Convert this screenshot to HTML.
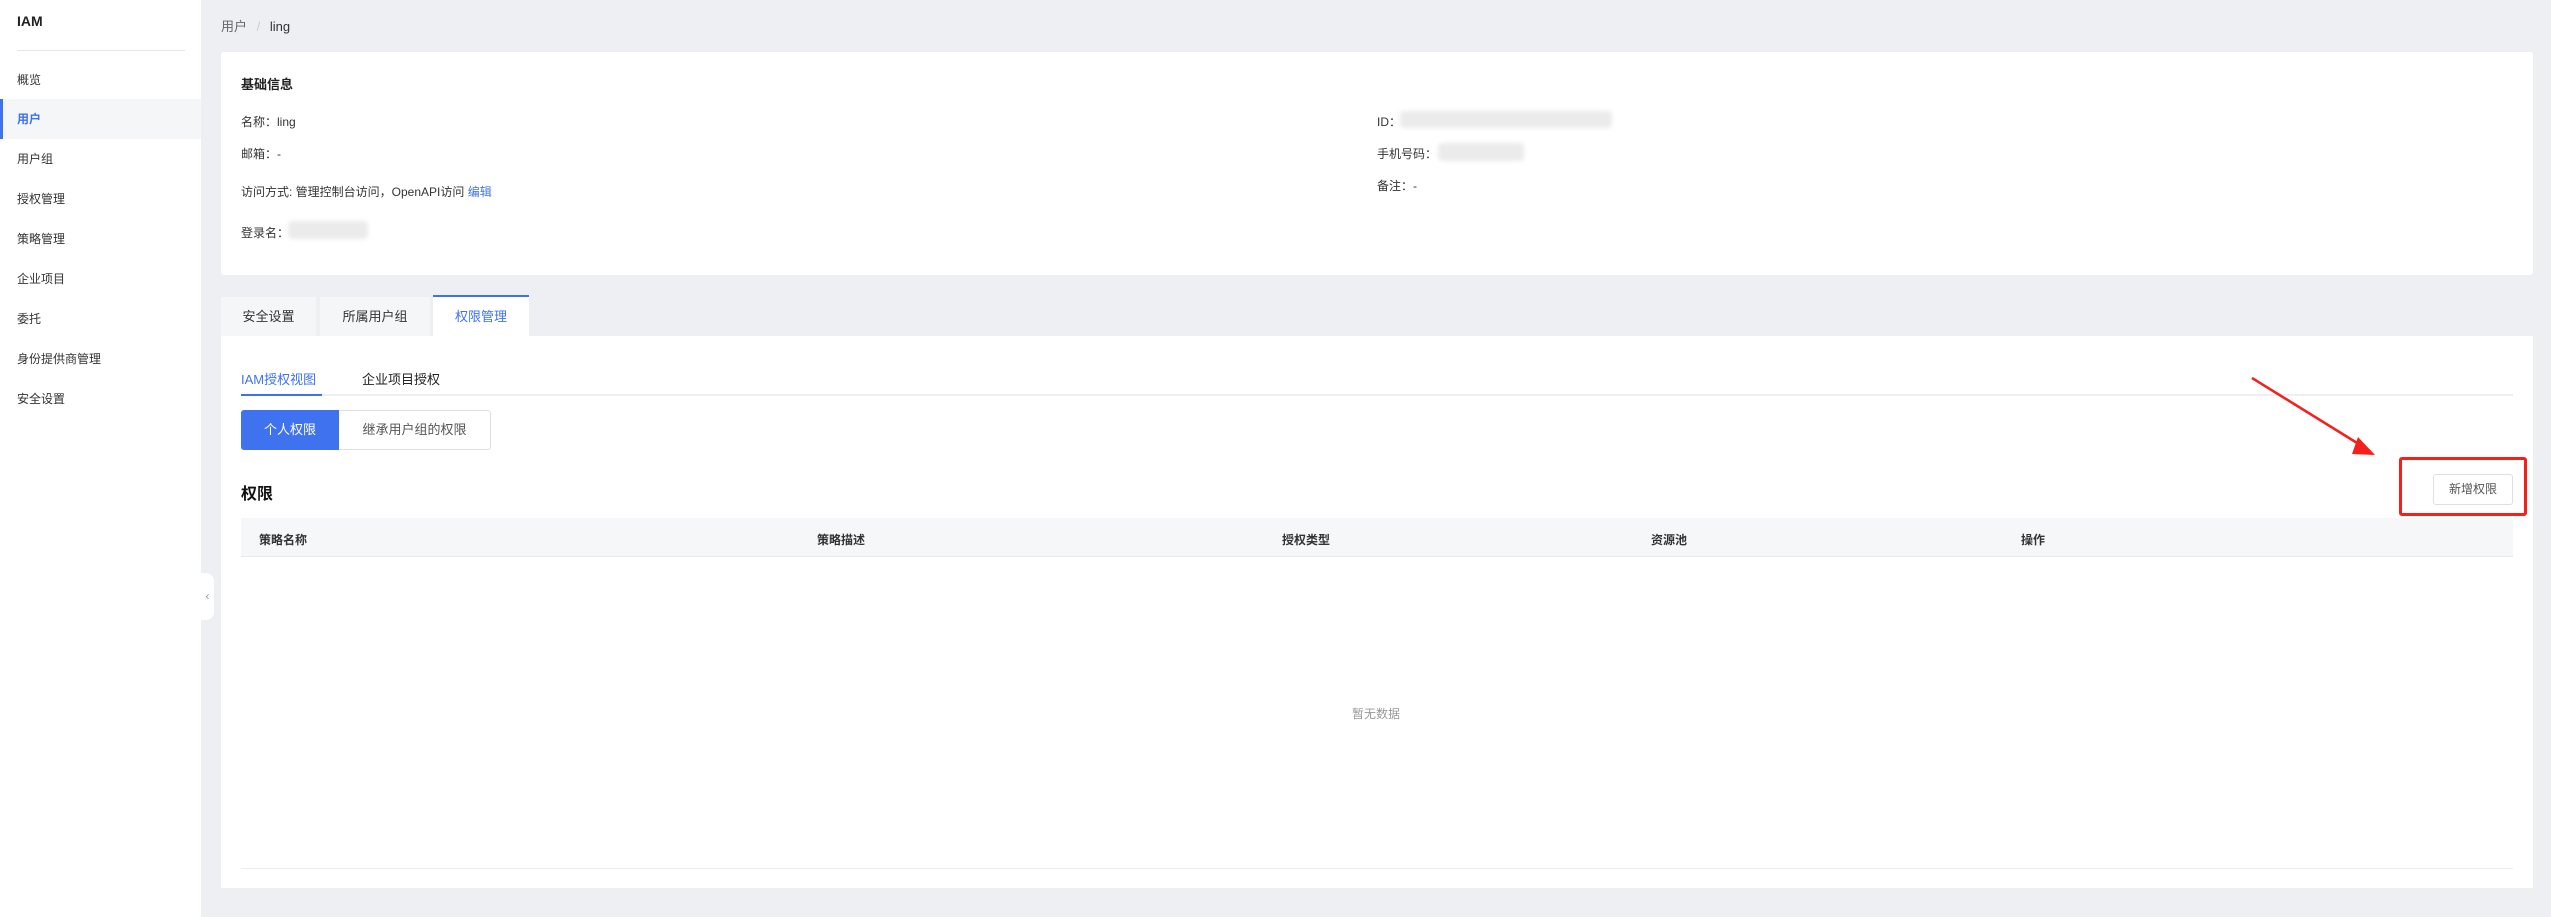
<!DOCTYPE html>
<html><head><meta charset="utf-8"><style>
*{margin:0;padding:0;box-sizing:border-box}
body{width:2551px;height:917px;background:#eeeff3;font-family:"Liberation Sans","Noto Sans CJK SC",sans-serif;font-size:12px;color:#333;position:relative;overflow:hidden}
.a{position:absolute;white-space:nowrap}
.side{position:absolute;left:0;top:0;width:201px;height:917px;background:#fff}
.mi{position:absolute;left:17px;line-height:14px;font-size:12px;color:#333}
.blur{position:absolute;background:#ebebeb;border-radius:4px;filter:blur(2px)}
.th{position:absolute;top:531px;font-size:12px;color:#333;font-weight:bold}
</style></head><body>
<div class="side">
<div class="a" style="left:17px;top:13px;font-weight:bold;font-size:14px;color:#222">IAM</div>
<div class="a" style="left:17px;top:50px;width:168px;height:1px;background:#e4e6ea"></div>
<div class="a" style="left:0;top:99px;width:201px;height:40px;background:#f5f6f8;border-left:3px solid #3f72ee"></div>
<div class="mi" style="top:73px">概览</div>
<div class="mi" style="top:112px;color:#3f72ee;font-weight:bold">用户</div>
<div class="mi" style="top:152px">用户组</div>
<div class="mi" style="top:192px">授权管理</div>
<div class="mi" style="top:232px">策略管理</div>
<div class="mi" style="top:272px">企业项目</div>
<div class="mi" style="top:312px">委托</div>
<div class="mi" style="top:352px">身份提供商管理</div>
<div class="mi" style="top:392px">安全设置</div>
</div>
<div class="a" style="left:201px;top:573px;width:13px;height:47px;background:#fff;border-radius:0 8px 8px 0;color:#999;font-size:12px;line-height:47px;text-align:center">‹</div>
<div class="a" style="left:221px;top:16px;font-size:13px;color:#666">用户 <span style="color:#ccc;margin:0 6px">/</span> <span style="color:#333">ling</span></div>
<div class="a" style="left:221px;top:52px;width:2312px;height:223px;background:#fff;border-radius:3px"></div>
<div class="a" style="left:241px;top:74px;font-size:13px;font-weight:bold;color:#222">基础信息</div>
<div class="a" style="left:241px;top:113px">名称：ling</div>
<div class="a" style="left:241px;top:145px">邮箱：-</div>
<div class="a" style="left:241px;top:183px">访问方式: 管理控制台访问，OpenAPI访问 <span style="color:#3f72ee">编辑</span></div>
<div class="a" style="left:241px;top:224px">登录名：</div>
<div class="blur" style="left:288px;top:221px;width:80px;height:18px"></div>
<div class="a" style="left:1377px;top:113px">ID：</div>
<div class="blur" style="left:1400px;top:111px;width:212px;height:17px"></div>
<div class="a" style="left:1377px;top:145px">手机号码：</div>
<div class="blur" style="left:1438px;top:143px;width:86px;height:18px"></div>
<div class="a" style="left:1377px;top:177px">备注：-</div>
<div class="a" style="left:221px;top:297px;width:95px;height:39px;background:#f5f6f8;line-height:39px;text-align:center;font-size:13px">安全设置</div>
<div class="a" style="left:320px;top:297px;width:110px;height:39px;background:#f5f6f8;line-height:39px;text-align:center;font-size:13px">所属用户组</div>
<div class="a" style="left:433px;top:295px;width:96px;height:41px;background:#fff;border-top:2px solid #3f72ee;line-height:39px;text-align:center;font-size:13px;color:#3f72ee">权限管理</div>
<div class="a" style="left:221px;top:336px;width:2312px;height:552px;background:#fff"></div>
<div class="a" style="left:241px;top:394px;width:2272px;height:2px;background:#eeeff2"></div>
<div class="a" style="left:241px;top:369px;font-size:13px;color:#3f72ee">IAM授权视图</div>
<div class="a" style="left:241px;top:394px;width:81px;height:2px;background:#3f72ee"></div>
<div class="a" style="left:362px;top:369px;font-size:13px;color:#222">企业项目授权</div>
<div class="a" style="left:241px;top:410px;width:98px;height:40px;background:#3f72ee;color:#fff;font-size:13px;line-height:40px;text-align:center;border-radius:3px 0 0 3px">个人权限</div>
<div class="a" style="left:339px;top:410px;width:152px;height:40px;border:1px solid #dcdfe6;border-left:none;color:#555;font-size:13px;line-height:38px;text-align:center;border-radius:0 3px 3px 0">继承用户组的权限</div>
<div class="a" style="left:241px;top:480px;font-size:16px;font-weight:bold;color:#111">权限</div>
<div class="a" style="left:241px;top:518px;width:2272px;height:39px;background:#f6f7f9;border-bottom:1px solid #e8e9ec"></div>
<div class="th" style="left:259px">策略名称</div>
<div class="th" style="left:817px">策略描述</div>
<div class="th" style="left:1282px">授权类型</div>
<div class="th" style="left:1651px">资源池</div>
<div class="th" style="left:2021px">操作</div>
<div class="a" style="left:1352px;top:705px;color:#999">暂无数据</div>
<div class="a" style="left:241px;top:868px;width:2272px;height:1px;background:#ebecef"></div>
<div class="a" style="left:2433px;top:474px;width:80px;height:31px;border:1px solid #dcdfe6;border-radius:3px;line-height:29px;text-align:center;color:#555">新增权限</div>
<div class="a" style="left:2399px;top:457px;width:128px;height:59px;border:3px solid #f5201a;border-radius:3px"></div>
<svg class="a" style="left:0;top:0" width="2551" height="917"><line x1="2252" y1="378" x2="2362" y2="446" stroke="#f5201a" stroke-width="2.5"/><polygon points="2375,455 2358,437 2352,454" fill="#f5201a"/></svg>
</body></html>
